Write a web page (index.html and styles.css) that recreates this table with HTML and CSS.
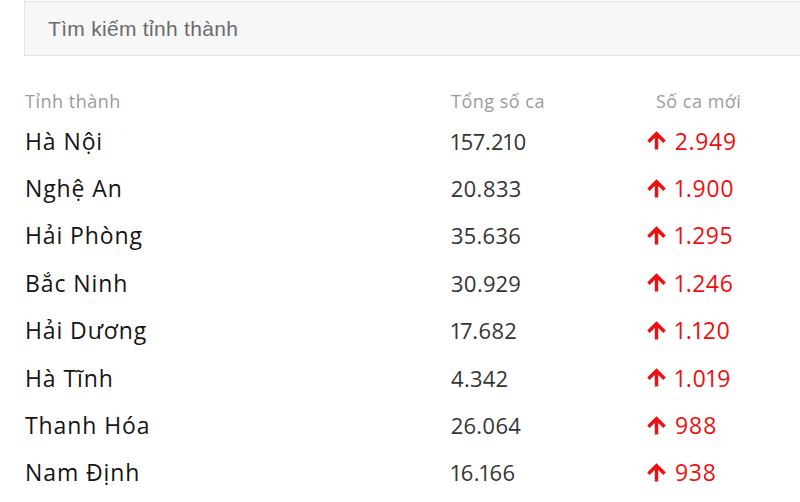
FILE: index.html
```html
<!DOCTYPE html>
<html lang="vi">
<head>
<meta charset="utf-8">
<title>Tình hình dịch theo tỉnh thành</title>
<link rel="stylesheet" href="styles.css">
</head>
<body>
<div class="page">
  <div class="search"><span class="placeholder">Tìm kiếm tỉnh thành</span></div>
  <div class="table">
    <div class="row head">
      <div class="c-name">Tỉnh thành</div>
      <div class="c-total">Tổng số ca</div>
      <div class="c-new">Số ca mới</div>
    </div>
    <div class="row">
      <div class="c-name">Hà Nội</div><div class="c-total">157.210</div>
      <div class="c-new"><svg class="up" viewBox="0 0 24 24"><path d="M4 12l1.41 1.41L11 7.83V20h2V7.83l5.58 5.59L20 12l-8-8-8 8z"/></svg>2.949</div>
    </div>
    <div class="row">
      <div class="c-name">Nghệ An</div><div class="c-total">20.833</div>
      <div class="c-new"><svg class="up" viewBox="0 0 24 24"><path d="M4 12l1.41 1.41L11 7.83V20h2V7.83l5.58 5.59L20 12l-8-8-8 8z"/></svg>1.900</div>
    </div>
    <div class="row">
      <div class="c-name">Hải Phòng</div><div class="c-total">35.636</div>
      <div class="c-new"><svg class="up" viewBox="0 0 24 24"><path d="M4 12l1.41 1.41L11 7.83V20h2V7.83l5.58 5.59L20 12l-8-8-8 8z"/></svg>1.295</div>
    </div>
    <div class="row">
      <div class="c-name">Bắc Ninh</div><div class="c-total">30.929</div>
      <div class="c-new"><svg class="up" viewBox="0 0 24 24"><path d="M4 12l1.41 1.41L11 7.83V20h2V7.83l5.58 5.59L20 12l-8-8-8 8z"/></svg>1.246</div>
    </div>
    <div class="row">
      <div class="c-name">Hải Dương</div><div class="c-total">17.682</div>
      <div class="c-new"><svg class="up" viewBox="0 0 24 24"><path d="M4 12l1.41 1.41L11 7.83V20h2V7.83l5.58 5.59L20 12l-8-8-8 8z"/></svg>1.120</div>
    </div>
    <div class="row">
      <div class="c-name">Hà Tĩnh</div><div class="c-total">4.342</div>
      <div class="c-new"><svg class="up" viewBox="0 0 24 24"><path d="M4 12l1.41 1.41L11 7.83V20h2V7.83l5.58 5.59L20 12l-8-8-8 8z"/></svg>1.019</div>
    </div>
    <div class="row">
      <div class="c-name">Thanh Hóa</div><div class="c-total">26.064</div>
      <div class="c-new"><svg class="up" viewBox="0 0 24 24"><path d="M4 12l1.41 1.41L11 7.83V20h2V7.83l5.58 5.59L20 12l-8-8-8 8z"/></svg>988</div>
    </div>
    <div class="row">
      <div class="c-name">Nam Định</div><div class="c-total">16.166</div>
      <div class="c-new"><svg class="up" viewBox="0 0 24 24"><path d="M4 12l1.41 1.41L11 7.83V20h2V7.83l5.58 5.59L20 12l-8-8-8 8z"/></svg>938</div>
    </div>
  </div>
</div>
</body>
</html>
```
FILE: styles.css
```css
html, body {
  margin: 0;
  padding: 0;
  background: #ffffff;
  overflow: hidden;
}
.page {
  padding: 1px 0 0 24px;
  font-family: "Open Sans", "Noto Sans", sans-serif;
}
.search {
  height: 53px;
  border: 1px solid #e4e4e4;
  border-right: none;
  background: #f7f7f7;
  display: flex;
  align-items: center;
  padding-left: 23px;
}
.placeholder {
  font-family: "Liberation Sans", Arial, sans-serif;
  font-size: 21px;
  color: #6b6b6b;
  letter-spacing: 0.3px;
}
.table {
  margin-top: 33px;
  padding-left: 1px;
}
.row {
  display: grid;
  grid-template-columns: 426px 197px 1fr;
  align-items: center;
  height: 47.4px;
  font-size: 22px;
}
.row.head {
  height: 24px;
  margin-bottom: 4px;
  font-size: 18px;
  letter-spacing: 0.5px;
}
.c-name {
  color: #151515;
  font-size: 23px;
  letter-spacing: 0.9px;
}
.c-total {
  color: #353535;
  letter-spacing: 0.3px;
  font-variant-numeric: proportional-nums;
}
.c-new {
  color: #ec1010;
  display: flex;
  align-items: center;
  font-size: 23px;
  letter-spacing: 0.7px;
  font-variant-numeric: proportional-nums;
}
.head .c-name,
.head .c-total,
.head .c-new {
  color: #9b9b9b;
  font-size: 18px;
  letter-spacing: 0.5px;
}
.head .c-new {
  padding-left: 8px;
}
.up {
  width: 25px;
  height: 25px;
  fill: #ec1010;
  margin-left: -4px;
  margin-right: 6px;
  stroke: #ec1010;
  stroke-width: 1.3;
}
```
